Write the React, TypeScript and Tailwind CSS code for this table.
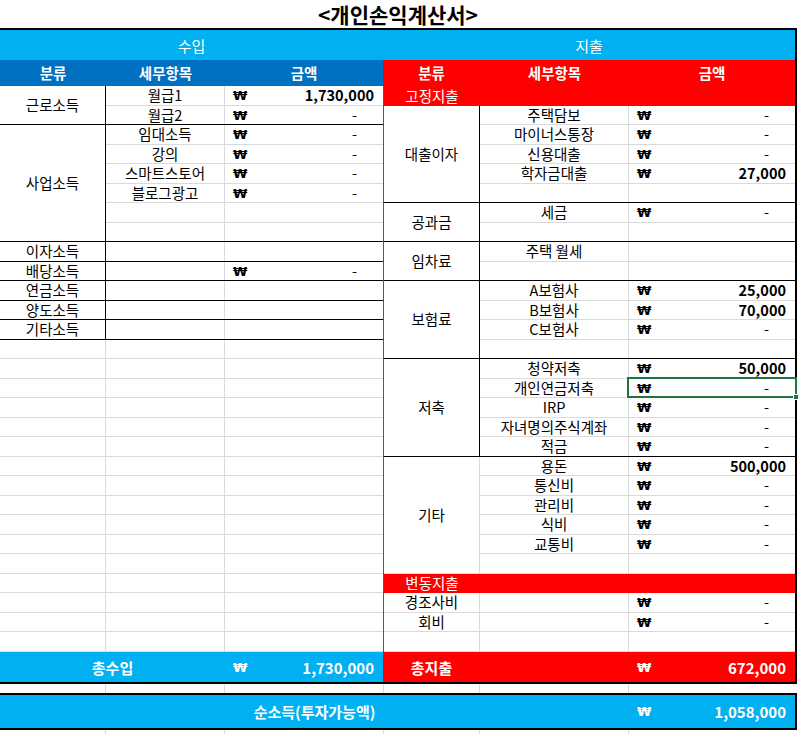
import React from 'react';

type Item = { n?: string; v?: number; sel?: boolean };
type Group = { label: string; items: Item[]; last?: boolean };

const GRID = 'border-[#dadada]';

const incomeGroups: Group[] = [
  { label: '근로소득', items: [{ n: '월급1', v: 1730000 }, { n: '월급2', v: 0 }] },
  {
    label: '사업소득',
    items: [{ n: '임대소득', v: 0 }, { n: '강의', v: 0 }, { n: '스마트스토어', v: 0 }, { n: '블로그광고', v: 0 }, {}, {}],
  },
  { label: '이자소득', items: [{}] },
  { label: '배당소득', items: [{ v: 0 }] },
  { label: '연금소득', items: [{}] },
  { label: '양도소득', items: [{}] },
  { label: '기타소득', items: [{}] },
];

const expenseGroups: Group[] = [
  {
    label: '대출이자',
    items: [{ n: '주택담보', v: 0 }, { n: '마이너스통장', v: 0 }, { n: '신용대출', v: 0 }, { n: '학자금대출', v: 27000 }, {}],
  },
  { label: '공과금', items: [{ n: '세금', v: 0 }, {}] },
  { label: '임차료', items: [{ n: '주택 월세' }, {}] },
  { label: '보험료', items: [{ n: 'A보험사', v: 25000 }, { n: 'B보험사', v: 70000 }, { n: 'C보험사', v: 0 }, {}] },
  {
    label: '저축',
    items: [
      { n: '청약저축', v: 50000 },
      { n: '개인연금저축', v: 0, sel: true },
      { n: 'IRP', v: 0 },
      { n: '자녀명의주식계좌', v: 0 },
      { n: '적금', v: 0 },
    ],
  },
  {
    label: '기타',
    items: [{ n: '용돈', v: 500000 }, { n: '통신비', v: 0 }, { n: '관리비', v: 0 }, { n: '식비', v: 0 }, { n: '교통비', v: 0 }, {}],
    last: true,
  },
];

// rows alternate 20 / 19 px like the sheet
const rowH = (i: number) => (i % 2 === 0 ? 'h-[20px]' : 'h-[19px]');
const groupH = (start: number, count: number) => {
  let h = 0;
  for (let i = start; i < start + count; i++) h += i % 2 === 0 ? 20 : 19;
  return h;
};

function Won() {
  return <span className="font-bold text-[13px] font-['DejaVu_Sans',sans-serif]">₩</span>;
}

function Amount({ v, light }: { v?: number; light?: boolean }) {
  if (v === undefined) return null;
  return (
    <div className={`flex-1 h-full flex items-center justify-between pl-[8px] ${light ? 'text-white' : ''}`}>
      <Won />
      {v === 0 ? (
        <span className="pr-[26px]">-</span>
      ) : (
        <span className="font-bold pr-[9px]">{v.toLocaleString('en-US')}</span>
      )}
    </div>
  );
}

function GroupBlock({ g, start, c1, c2 }: { g: Group; start: number; c1: string; c2: string }) {
  const edge = g.last ? GRID : 'border-black';
  return (
    <div className="flex">
      <div
        className={`${c1} shrink-0 border-r ${GRID} border-b ${edge} flex items-center justify-center`}
        style={{ height: groupH(start, g.items.length) }}
      >
        {g.label}
      </div>
      <div className="flex-1 flex flex-col">
        {g.items.map((it, k) => {
          const isLast = k === g.items.length - 1;
          return (
            <div key={k} className={`flex ${rowH(start + k)} border-b ${isLast ? edge : GRID}`}>
              <div className={`${c2} shrink-0 h-full border-r ${GRID} flex items-center justify-center`}>{it.n}</div>
              <div className="relative flex-1 h-full flex">
                <Amount v={it.v} />
                {it.sel && (
                  <div className="absolute left-[-2px] right-[-2px] top-[-2px] bottom-[-1px] border-2 border-[#217346]">
                    <div className="absolute right-[-4px] bottom-[-4px] w-[6px] h-[6px] bg-[#217346] border border-white" />
                  </div>
                )}
              </div>
            </div>
          );
        })}
      </div>
    </div>
  );
}

function BlankRow({ i, cols }: { i: number; cols: string[] }) {
  return (
    <div className={`flex ${rowH(i)} border-b ${GRID}`}>
      {cols.map((c, k) => (
        <div key={k} className={`${c} shrink-0 h-full ${k < cols.length - 1 ? `border-r ${GRID}` : ''}`} />
      ))}
    </div>
  );
}

function IncomeSide() {
  let r = 0;
  const blocks = incomeGroups.map((g, k) => {
    const s = r;
    r += g.items.length;
    return <GroupBlock key={k} g={g} start={s} c1="w-[106px]" c2="w-[119px]" />;
  });
  const blanks = [];
  for (let i = r; i < 29; i++) blanks.push(<BlankRow key={i} i={i} cols={['w-[106px]', 'w-[119px]', 'flex-1']} />);
  return (
    <div className="w-[383px] shrink-0 flex flex-col">
      {blocks}
      {blanks}
    </div>
  );
}

function RedBand({ i, label }: { i: number; label: string }) {
  return (
    <div className={`flex ${rowH(i)} bg-[#ff0000] text-white`}>
      <div className="w-[96px] flex items-center justify-center">{label}</div>
    </div>
  );
}

function ExpenseSide() {
  let r = 1;
  const blocks = expenseGroups.map((g, k) => {
    const s = r;
    r += g.items.length;
    return <GroupBlock key={k} g={g} start={s} c1="w-[96px]" c2="w-[149px]" />;
  });
  return (
    <div className="w-[412px] shrink-0 flex flex-col border-l border-[#595959]">
      <RedBand i={0} label="고정지출" />
      {blocks}
      <RedBand i={25} label="변동지출" />
      {[
        { n: '경조사비', v: 0 },
        { n: '회비', v: 0 },
      ].map((it, k) => (
        <div key={k} className={`flex ${rowH(26 + k)} border-b ${GRID}`}>
          <div className={`w-[96px] shrink-0 h-full border-r ${GRID} flex items-center justify-center`}>{it.n}</div>
          <div className={`w-[149px] shrink-0 h-full border-r ${GRID}`} />
          <Amount v={it.v} />
        </div>
      ))}
      <BlankRow i={28} cols={['w-[96px]', 'w-[149px]', 'flex-1']} />
    </div>
  );
}

function GridGap({ h }: { h: string }) {
  return (
    <div className={`flex ${h} w-[797px]`}>
      <div className={`w-[106px] border-r ${GRID}`} />
      <div className={`w-[119px] border-r ${GRID}`} />
      <div className={`w-[159px] border-r ${GRID}`} />
      <div className={`w-[96px] border-r ${GRID}`} />
      <div className={`w-[149px] border-r ${GRID}`} />
      <div className="flex-1" />
    </div>
  );
}

export default function App() {
  return (
    <div className="w-[800px] h-[734px] overflow-hidden bg-white text-black text-[14.5px] leading-none font-['Noto_Sans_CJK_KR',sans-serif]">
      <div className="h-[28px] flex items-center justify-center text-[21px] font-bold pr-[4px]">&lt;개인손익계산서&gt;</div>

      <div className="w-[797px] border-t-2 border-r-2 border-b-2 border-black">
        {/* 수입 / 지출 */}
        <div className="flex h-[30px] bg-[#00b0f0] text-white text-[15px]">
          <div className="w-[383px] flex items-center justify-center">수입</div>
          <div className="flex-1 flex items-center justify-center">지출</div>
        </div>

        {/* column headers */}
        <div className="flex h-[26px] text-white font-bold">
          <div className="w-[383px] flex bg-[#0070c0]">
            <div className="w-[106px] flex items-center justify-center">분류</div>
            <div className="w-[119px] flex items-center justify-center">세무항목</div>
            <div className="flex-1 flex items-center justify-center">금액</div>
          </div>
          <div className="flex-1 flex bg-[#ff0000]">
            <div className="w-[97px] flex items-center justify-center">분류</div>
            <div className="w-[149px] flex items-center justify-center">세부항목</div>
            <div className="flex-1 flex items-center justify-center">금액</div>
          </div>
        </div>

        <div className="flex">
          <IncomeSide />
          <ExpenseSide />
        </div>

        {/* totals */}
        <div className="flex h-[30px] text-white font-bold text-[15px]">
          <div className="w-[383px] flex bg-[#00b0f0]">
            <div className="w-[225px] flex items-center justify-center">총수입</div>
            <Amount v={1730000} light />
          </div>
          <div className="flex-1 flex bg-[#ff0000]">
            <div className="w-[97px] flex items-center justify-center">총지출</div>
            <div className="w-[149px]" />
            <Amount v={672000} light />
          </div>
        </div>
      </div>

      <GridGap h="h-[9px]" />

      <div className="w-[797px] h-[37px] border-y-2 border-r-2 border-black bg-[#00b0f0] flex text-white font-bold text-[15px]">
        <div className="w-[629px] flex items-center justify-center">순소득(투자가능액)</div>
        <Amount v={1058000} light />
      </div>

      <GridGap h="h-[4px]" />
    </div>
  );
}
